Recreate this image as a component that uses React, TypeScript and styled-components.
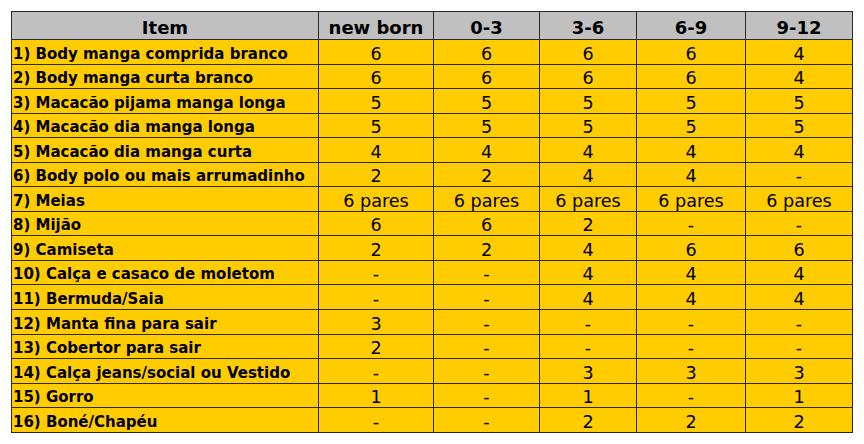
import styled, { createGlobalStyle } from "styled-components";

const GlobalStyle = createGlobalStyle`
  html, body {
    margin: 0;
    padding: 0;
    background: #ffffff;
  }
`;

const Page = styled.div`
  padding: 11px 0 0 11px;
`;

const Table = styled.table`
  border-collapse: collapse;
  table-layout: fixed;
  width: 841px;
  font-family: "DejaVu Sans", Verdana, sans-serif;
  color: #000;
  border: 1px solid #2a2a2a;
`;

const HeadCell = styled.th`
  height: 26px;
  padding: 0 0 1px;
  background: #c0c0c0;
  border: 1px solid #2a2a2a;
  font-size: 18px;
  font-weight: bold;
  text-align: center;
  vertical-align: bottom;
  line-height: 20px;
`;

const Row = styled.tr`
  height: 24.56px;
`;

const ItemCell = styled.td`
  padding: 0 0 1px 1px;
  background: #ffcc00;
  border: 1px solid #2a2a2a;
  font-size: 15px;
  font-weight: bold;
  white-space: nowrap;
  vertical-align: bottom;
  line-height: 18px;
`;

const ValueCell = styled.td`
  padding: 0 0 0;
  background: #ffcc00;
  border: 1px solid #2a2a2a;
  font-size: 17.6px;
  text-align: center;
  white-space: nowrap;
  vertical-align: bottom;
  line-height: 20px;
`;

const widths = [307, 115, 106, 97, 109, 107];
const headers = ["Item", "new born", "0-3", "3-6", "6-9", "9-12"];

const rows: [string, string[]][] = [
  ["1) Body manga comprida branco", ["6", "6", "6", "6", "4"]],
  ["2) Body manga curta branco", ["6", "6", "6", "6", "4"]],
  ["3) Macacão pijama manga longa", ["5", "5", "5", "5", "5"]],
  ["4) Macacão dia manga longa", ["5", "5", "5", "5", "5"]],
  ["5) Macacão dia manga curta", ["4", "4", "4", "4", "4"]],
  ["6) Body polo ou mais arrumadinho", ["2", "2", "4", "4", "-"]],
  ["7) Meias", ["6 pares", "6 pares", "6 pares", "6 pares", "6 pares"]],
  ["8) Mijão", ["6", "6", "2", "-", "-"]],
  ["9) Camiseta", ["2", "2", "4", "6", "6"]],
  ["10) Calça e casaco de moletom", ["-", "-", "4", "4", "4"]],
  ["11) Bermuda/Saia", ["-", "-", "4", "4", "4"]],
  ["12) Manta fina para sair", ["3", "-", "-", "-", "-"]],
  ["13) Cobertor para sair", ["2", "-", "-", "-", "-"]],
  ["14) Calça jeans/social ou Vestido", ["-", "-", "3", "3", "3"]],
  ["15) Gorro", ["1", "-", "1", "-", "1"]],
  ["16) Boné/Chapéu", ["-", "-", "2", "2", "2"]],
];

function App() {
  return (
    <Page>
      <GlobalStyle />
      <Table>
        <colgroup>
          {widths.map((w, i) => (
            <col key={i} style={{ width: w }} />
          ))}
        </colgroup>
        <thead>
          <tr>
            {headers.map((h) => (
              <HeadCell key={h}>{h}</HeadCell>
            ))}
          </tr>
        </thead>
        <tbody>
          {rows.map(([item, values]) => (
            <Row key={item}>
              <ItemCell>{item}</ItemCell>
              {values.map((v, i) => (
                <ValueCell key={i}>{v}</ValueCell>
              ))}
            </Row>
          ))}
        </tbody>
      </Table>
    </Page>
  );
}

export default App;
